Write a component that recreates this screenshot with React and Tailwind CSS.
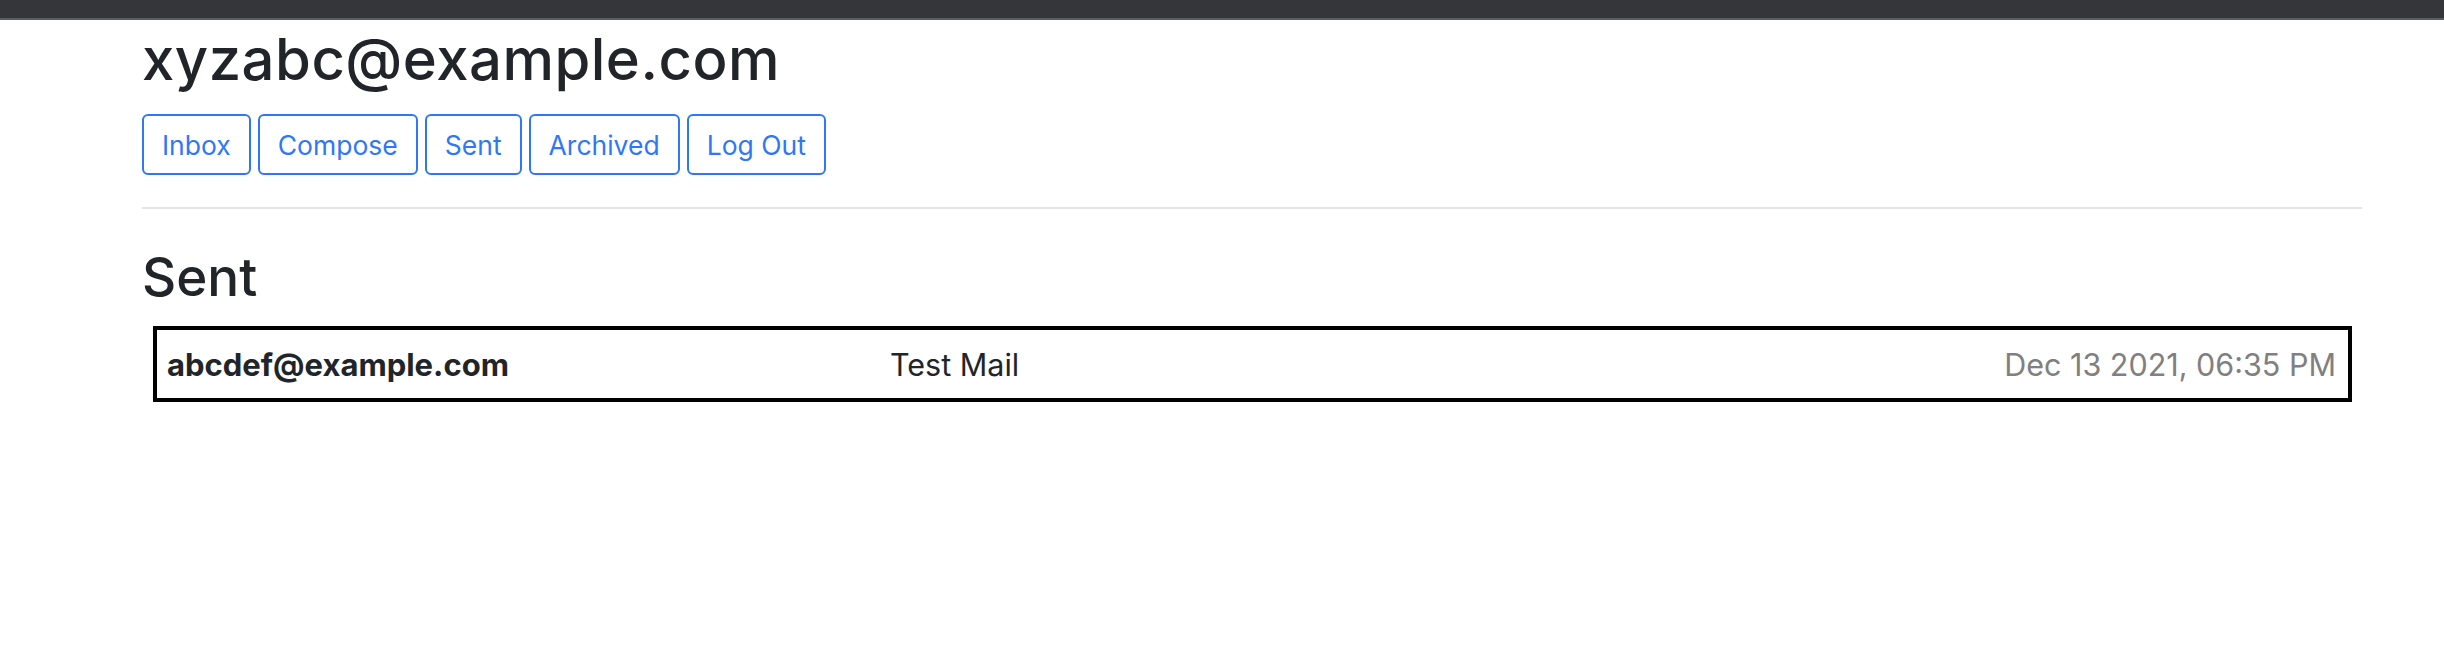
import React from "react";

const emails = [
  { id: 1, sender: "abcdef@example.com", subject: "Test Mail", timestamp: "Dec 13 2021, 06:35 PM" },
];

const navItems = ["Inbox", "Compose", "Sent", "Archived", "Log Out"];

export default function App() {
  return (
    <div className="min-h-screen bg-white font-['Inter','Liberation_Sans',sans-serif] text-[#212529]">
      {/* browser-ish top strip */}
      <div className="h-[20px] border-b-2 border-[#5c5d61] bg-[#35363a]" />

      <div className="ml-[142px] w-[2220px]">
        <h1 className="mt-[7px] text-[58px] font-medium leading-[64px] tracking-[0.5px]">
          xyzabc@example.com
        </h1>

        <div className="mt-[23px] flex gap-[7px]">
          {navItems.map((item) => (
            <button
              key={item}
              className="flex h-[61px] items-center rounded-[6px] border-2 border-[#2f78f5] px-[18px] pt-[2px] text-[26.5px] text-[#2f78f5]"
            >
              {item}
            </button>
          ))}
        </div>

        <hr className="mt-[32px] border-t-2 border-[#e5e5e5]" />

        <h3 className="mt-[36px] text-[53px] font-medium leading-[64px]">Sent</h3>

        <div className="mt-[17px] ml-[11px] w-[2199px]">
          {emails.map((email) => (
            <div
              key={email.id}
              className="grid h-[76px] grid-cols-3 items-center border-4 border-black pl-[10px] pr-[12px] pt-[2px] text-[30.5px]"
            >
              <span className="text-[31px] font-bold">{email.sender}</span>
              <span>{email.subject}</span>
              <span className="text-right text-[#808080]">{email.timestamp}</span>
            </div>
          ))}
        </div>
      </div>
    </div>
  );
}
